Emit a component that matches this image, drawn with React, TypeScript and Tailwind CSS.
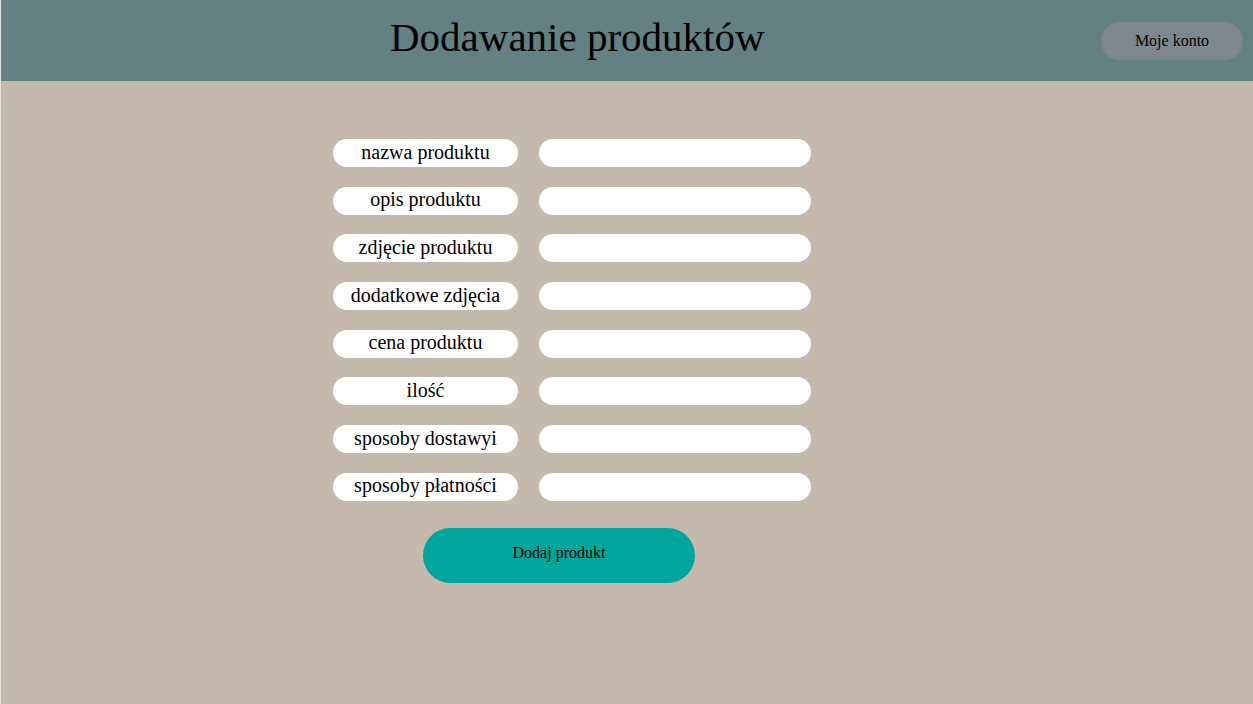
import React from 'react'

const fields = [
  'nazwa produktu',
  'opis produktu',
  'zdjęcie produktu',
  'dodatkowe zdjęcia',
  'cena produktu',
  'ilość',
  'sposoby dostawyi',
  'sposoby płatności',
]

export default function App() {
  return (
    <div
      className="min-h-[704px] w-full bg-[#c5b9ae] border-l border-[#e4e1de]"
      style={{ fontFamily: '"Liberation Serif", "DejaVu Serif", serif' }}
    >
      {/* Header */}
      <header className="h-[81px] bg-[#638082] flex items-center">
        <h1 className="ml-[389px] text-[41px] leading-none text-black pb-[6px]">
          Dodawanie produktów
        </h1>
        <button
          type="button"
          className="ml-auto mr-[10px] w-[142px] h-[38px] rounded-full bg-[#7d878e] text-[16px] text-black"
        >
          Moje konto
        </button>
      </header>

      {/* Form */}
      <form className="ml-[332px] pt-[58px] flex flex-col">
        <div className="grid grid-cols-[185px_272px] gap-x-[21px] gap-y-[19.7px]">
          {fields.map((f) => (
            <React.Fragment key={f}>
              <label className="h-[28px] rounded-full bg-white flex items-center justify-center text-[20px] text-black pb-[3px]">
                {f}
              </label>
              <input
                type="text"
                className="h-[28px] rounded-full bg-white outline-none px-3"
              />
            </React.Fragment>
          ))}
        </div>
        <button
          type="button"
          className="mt-[27px] ml-[90px] w-[272px] h-[55px] rounded-full bg-[#00a69c] text-[16px] text-black pb-[4px]"
        >
          Dodaj produkt
        </button>
      </form>
    </div>
  )
}
